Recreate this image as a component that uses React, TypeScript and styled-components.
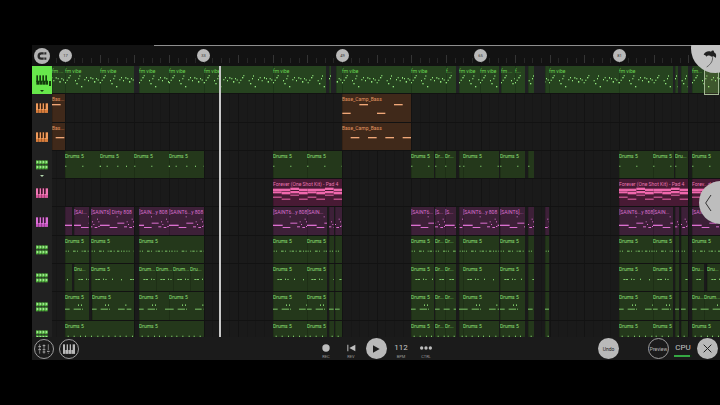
import React from "react";
import styled, { createGlobalStyle, css } from "styled-components";

/* ---------- timeline data ---------- */

const ORIGIN = 52;
const FIRST_BAR = 65;
const BAR = 277 / 32;

type Tone = "vibe" | "orange" | "green" | "pink" | "purple";
type Pattern = "vibe" | "bassA" | "bassB" | "hat" | "pad" | "sub" | "perc" | "snare" | "roll" | "kick";
/* start, end, label, phase of the note pattern (thirds of a unit) */
type ClipData = [number, number, string?, number?];
type Note = [number, number, number, number?];

const PALETTE: Record<Tone, { bg: string; text: string; note: string }> = {
  vibe: { bg: "#26431f", text: "#6bd653", note: "#93e67e" },
  orange: { bg: "#40291a", text: "#e39661", note: "#f0a778" },
  green: { bg: "#24381b", text: "#8fe078", note: "#7cc468" },
  pink: { bg: "#481a34", text: "#ea74b0", note: "#f068ad" },
  purple: { bg: "#3d2038", text: "#dc70d0", note: "#dc6fd0" },
};

/* Notes are [x, y, width, height] on a grid of three steps per unit. */
const PATTERNS: Record<Pattern, { period: number; notes: Note[] }> = {
  vibe: {
    period: 104,
    notes: [
      [0, 48, 3, 4], [5, 41, 3, 4], [10, 33, 4, 4], [14, 27, 3, 4], [30, 42, 3, 4], [34, 51, 4, 4], [40, 36, 3, 4],
      [43, 28, 3, 4], [48, 60, 4, 4], [58, 39, 3, 4], [63, 33, 3, 4], [69, 42, 3, 4], [76, 33, 3, 5], [82, 36, 3, 4],
      [87, 45, 4, 5], [93, 36, 3, 4], [98, 40, 3, 4],
    ],
  },
  bassA: { period: 104, notes: [[1, 56, 25, 4], [52, 30, 26, 4]] },
  bassB: { period: 52, notes: [[26, 42, 26, 4]] },
  hat: { period: 207, notes: [[1, 44, 3, 4], [52, 44, 3, 4], [104, 44, 3, 4], [124, 44, 3, 4], [156, 44, 3, 4], [182, 44, 3, 4]] },
  pad: {
    period: 104,
    notes: [
      [0, 29, 52, 7], [52, 26, 26, 7], [78, 29, 26, 7], [0, 37, 26, 6], [26, 38, 26, 8], [52, 36, 26, 7], [78, 38, 26, 8],
      [0, 53, 26], [26, 59, 26], [52, 47, 26], [78, 59, 26],
    ],
  },
  sub: {
    period: 104,
    notes: [
      [0, 53, 29, 4], [29, 60, 23], [50, 28, 3], [52, 47, 21], [72, 58, 9], [80, 43, 3], [84, 51, 3], [88, 60, 8],
      [95, 35, 3], [99, 43, 3], [99, 57, 4],
    ],
  },
  perc: {
    period: 104,
    notes: [
      [2, 44, 3], [9, 44, 3], [24, 44, 8], [36, 44, 3], [50, 44, 3], [56, 44, 7], [68, 44, 3], [78, 44, 7], [90, 44, 3], [97, 44, 4],
    ],
  },
  snare: { period: 104, notes: [[13, 45, 6], [20, 45, 7], [36, 44, 3, 4], [43, 45, 4], [63, 44, 3, 4], [90, 45, 3, 4]] },
  roll: {
    period: 104,
    notes: [[0, 50, 14], [26, 50, 22], [51, 50, 3], [39, 37, 3, 5], [48, 37, 3, 5], [78, 50, 20], [100, 37, 3, 5]],
  },
  kick: { period: 52, notes: [[8, 44, 3, 5], [26, 44, 3, 5], [45, 44, 3, 5]] },
};

const drumsTail: ClipData[] = [
  [273, 307, "Drums 5"], [307, 327, "Drums 5"], [329, 334], [335, 342],
  [411, 434, "Drums 5"], [435, 445, "Dr..."], [445, 456, "Dr..."], [459, 463], [463, 499, "Drums 5"],
  [500, 525, "Drums 5"], [528, 534],
];
const drumsFar: ClipData[] = [[619, 653, "Drums 5"], [653, 673, "Drums 5"], [675, 679], [681, 688]];

interface Track {
  name: string;
  icon: "keys" | "pads";
  tone: Tone;
  pattern: Pattern;
  selected?: boolean;
  expandable?: boolean;
  clips: ClipData[];
}

const TRACKS: Track[] = [
  {
    name: "fm vibe", icon: "keys", tone: "vibe", pattern: "vibe", selected: true, expandable: true,
    clips: [
      [52, 65, "fm ...", 65], [65, 100, "fm vibe"], [100, 134, "fm vibe"], [139, 169, "fm vibe"], [169, 204, "fm vibe"],
      [204, 273, "fm vibe"], [273, 326, "fm vibe"], [329, 331, "", 40], [336, 342, "", 85], [342, 411, "fm vibe"],
      [411, 446, "fm vibe"], [446, 456, "f..."], [459, 480, "fm vibe"], [480, 499, "fm vibe"], [501, 515, "fm ..."],
      [515, 525, "f..."], [528, 534, "", 28], [545, 549, "", 90], [549, 619, "fm vibe"], [619, 673, "fm vibe"],
      [675, 678, "", 40], [681, 688, "", 28], [692, 720, "fm..."],
    ],
  },
  { name: "Base_Camp_Bass", icon: "keys", tone: "orange", pattern: "bassA", clips: [[52, 65, "Bas...", 52], [342, 411, "Base_Camp_Bass"]] },
  { name: "Base_Camp_Bass 2", icon: "keys", tone: "orange", pattern: "bassB", clips: [[52, 65, "Bas...", 15], [342, 411, "Base_Camp_Bass"]] },
  {
    name: "Drums 5", icon: "pads", tone: "green", pattern: "hat", expandable: true,
    clips: [
      [65, 100, "Drums 5"], [100, 134, "Drums 5", 104], [134, 169, "Drums 5"], [169, 204, "Drums 5", 104],
      [273, 307, "Drums 5"], [307, 342, "Drums 5"],
      [411, 434, "Drums 5"], [435, 445, "Dr..."], [445, 456, "Dr..."], [459, 463], [463, 499, "Drums 5"],
      [500, 525, "Drums 5"], [528, 534],
      [619, 653, "Drums 5"], [653, 674, "Drums 5"], [675, 688, "Dru..."], [692, 720, "Drums 5"],
    ],
  },
  {
    name: "Forever (One Shot Kit) - Pad 4", icon: "keys", tone: "pink", pattern: "pad",
    clips: [[273, 342, "Forever (One Shot Kit) - Pad 4"], [619, 688, "Forever (One Shot Kit) - Pad 4"], [692, 720, "Forev...d 4"]],
  },
  {
    name: "[SAINT6] Dirty 808", icon: "keys", tone: "purple", pattern: "sub",
    clips: [
      [65, 72], [74, 89, "[SAI...", 8], [91, 134, "[SAINT6] Dirty 808", 77], [139, 169, "[SAIN...y 808", 14], [169, 204, "[SAINT6...y 808"],
      [273, 307, "[SAINT6...y 808"], [307, 327, "[SAIN..."], [329, 334, "", 74], [335, 342, "", 84],
      [411, 434, "[SAINT6..."], [435, 445, "[S...", 72], [445, 456, "[S..."], [459, 463, "", 86], [463, 499, "[SAINT6...y 808"],
      [500, 525, "[SAINT6]..."], [528, 534, "", 84], [545, 549, "", 88],
      [619, 653, "[SAINT6...y 808"], [653, 673, "[SAIN..."], [675, 679, "", 74], [681, 688, "", 84], [692, 720, "[SAINT6]..."],
    ],
  },
  {
    name: "Drums 5 B", icon: "pads", tone: "green", pattern: "perc",
    clips: [[65, 89, "Drums 5"], [91, 134, "Drums 5"], [139, 204, "Drums 5"], ...drumsTail, [545, 549], ...drumsFar, [692, 720, "Drums 5"]],
  },
  {
    name: "Drums 5 C", icon: "pads", tone: "green", pattern: "snare",
    clips: [
      [65, 72, "", 84], [74, 89, "Dru..."], [91, 134, "Drums 5"], [139, 156, "Drum..."], [156, 173, "Drum..."], [173, 190, "Drum..."],
      [190, 204, "Dru..."], ...drumsTail, [545, 549], ...drumsFar, [692, 704, "Dru..."], [707, 720, "Dru..."],
    ],
  },
  {
    name: "Drums 5 D", icon: "pads", tone: "green", pattern: "roll",
    clips: [
      [65, 89, "Drums 5"], [92, 134, "Drums 5"], [139, 169, "Drums 5"], [169, 204, "Drums 5"], ...drumsTail, [545, 549], ...drumsFar,
      [692, 704, "Dru..."], [704, 720, "Drum..."],
    ],
  },
  {
    name: "Drums 5 E", icon: "pads", tone: "green", pattern: "kick",
    clips: [[65, 134, "Drums 5"], [139, 204, "Drums 5"], ...drumsTail, [545, 549], ...drumsFar, [692, 720, "Drums 5"]],
  },
];

const MARKERS = [17, 33, 49, 65, 81];
const barX = (bar: number) => Math.floor(FIRST_BAR + (bar - 17) * BAR) - ORIGIN;

/* ---------- styles ---------- */

const Global = createGlobalStyle`
  * { box-sizing: border-box; }
  body { margin: 0; background: #000; font-family: Roboto, "Liberation Sans", sans-serif; }
  button { margin: 0; padding: 0; border: 0; background: none; font: inherit; color: inherit; }
  svg { display: block; }
`;

const Page = styled.div`
  padding: 45px 0 45px 32px;
  background: #000;
`;

const Studio = styled.main`
  position: relative;
  overflow: hidden;
  background: #1a1a1a;
  color: #c4c4c4;
`;

const Ruler = styled.header`
  display: grid;
  grid-template-columns: 20px 1fr;
  align-items: center;
  height: 21px;
  background: #121212;
`;

const ScrollLine = styled.div`
  position: absolute;
  top: 0;
  left: 122px;
  right: 0;
  height: 1px;
  background: #8e8e8e;
`;

const SnapButton = styled.button`
  display: grid;
  place-items: center;
  width: 16px;
  height: 16px;
  margin-left: 2px;
  border-radius: 50%;
  background: #b4b4b4;
`;

const RulerTrack = styled.div`
  position: relative;
  height: 21px;
  overflow: hidden;
`;

const BarMarker = styled.span<{ $x: number }>`
  position: absolute;
  top: 4px;
  left: ${(p) => p.$x}px;
  width: 13px;
  height: 13px;
  margin-left: -6px;
  border-radius: 50%;
  background: #b9b9b9;
  color: #333;
  font-size: 4px;
  line-height: 13px;
  text-align: center;
`;

const Viewport = styled.section`
  position: relative;
  height: 271px;
  overflow: hidden;
`;

const TrackList = styled.div`
  display: grid;
  grid-template-rows: repeat(10, 1fr);
  height: 283px;
`;

const TrackRow = styled.div`
  display: grid;
  grid-template-columns: 20px 1fr;
  min-height: 0;
`;

const TrackHead = styled.button<{ $selected?: boolean }>`
  position: relative;
  display: grid;
  place-items: center;
  background: ${(p) => (p.$selected ? "#67e74b" : "#212121")};
`;

const Caret = styled.span<{ $dark?: boolean }>`
  position: absolute;
  left: 8px;
  bottom: 2px;
  border: 2px solid transparent;
  border-bottom: 0;
  border-top-color: ${(p) => (p.$dark ? "#143a0e" : "#b5d8ae")};
`;

const Level = styled.span`
  position: absolute;
  right: 1px;
  bottom: 8px;
  width: 2px;
  height: 5px;
  background: #16400f;
`;

const Lane = styled.div<{ $selected?: boolean }>`
  position: relative;
  overflow: hidden;
  background: ${(p) => (p.$selected ? "#212124" : "#1a1a1a")};
  border-bottom: 1px solid #121212;
`;

const Backdrop = styled.div`
  position: absolute;
  inset: 0;
`;

const Clip = styled.div<{ $x: number; $w: number; $tone: Tone }>`
  position: absolute;
  top: 0;
  bottom: 0;
  left: ${(p) => p.$x}px;
  width: ${(p) => p.$w}px;
  overflow: hidden;
  background: ${(p) => PALETTE[p.$tone].bg};
  color: ${(p) => PALETTE[p.$tone].text};
  box-shadow: inset 1px 0 rgba(0, 0, 0, 0.16);
`;

const ClipLabel = styled.span`
  position: absolute;
  top: 2px;
  left: 0;
  font-size: 5px;
  line-height: 6px;
  white-space: nowrap;
`;

const Playhead = styled.div`
  position: absolute;
  top: 0;
  bottom: 0;
  left: 187px;
  width: 2px;
  background: #c9c9c9;
`;

const Selection = styled.div`
  position: absolute;
  top: 0;
  right: 1px;
  width: 15px;
  height: 29px;
  border: 1px solid #a3b894;
  background: rgba(190, 190, 120, 0.16);
`;

const Logo = styled.div`
  position: absolute;
  top: -21px;
  right: -20px;
  width: 49px;
  height: 49px;
  border-radius: 50%;
  background: #c3c3c3;
  display: flex;
  align-items: flex-end;
  padding: 0 0 5px 11px;
`;

const Drawer = styled.button`
  position: absolute;
  top: 136px;
  right: -22px;
  display: flex;
  align-items: center;
  width: 43px;
  height: 43px;
  padding-left: 5px;
  border-radius: 50%;
  background: #bdbdbd;
`;

const Transport = styled.footer`
  display: grid;
  grid-template-columns: 1fr auto 1fr;
  align-items: center;
  height: 23px;
  background: #1b1b1b;
`;

const Group = styled.div<{ $end?: boolean }>`
  display: flex;
  align-items: center;
  ${(p) =>
    p.$end
      ? css`
          justify-content: flex-end;
          gap: 4px;
          padding-right: 2px;
        `
      : css`
          gap: 5px;
          padding-left: 2px;
        `}
`;

const Controls = styled.div`
  display: grid;
  grid-template-columns: repeat(5, 25px);
  justify-items: center;
  align-items: center;
`;

const Stack = styled.button`
  display: grid;
  grid-template-rows: 12px 5px;
  justify-items: center;
  align-items: center;
  padding-top: 4px;
`;

const Caption = styled.span`
  font-size: 4px;
  line-height: 5px;
  color: #9a9a9a;
`;

const Tempo = styled.span`
  font-size: 8px;
  line-height: 12px;
  color: #c8c8c8;
`;

const RoundButton = styled.button<{ $kind?: "outline" | "solid"; $small?: boolean }>`
  display: grid;
  place-items: center;
  flex: none;
  width: ${(p) => (p.$small ? 20 : 21)}px;
  height: ${(p) => (p.$small ? 20 : 21)}px;
  border-radius: 50%;
  font-size: 5px;
  line-height: 6px;
  ${(p) =>
    p.$kind === "outline"
      ? css`
          border: 1px solid #9c9c9c;
          color: #b9b9b9;
        `
      : css`
          background: #b9b9b9;
          color: #1c1c1c;
        `}
`;

const UndoSlot = styled.div`
  padding-right: 25px;
`;

const Cpu = styled.div`
  display: grid;
  grid-template-rows: 12px 2px;
  justify-items: center;
  row-gap: 1px;
  width: 20px;
  padding-top: 2px;
  font-size: 8px;
  line-height: 12px;
`;

const CpuMeter = styled.div`
  width: 18px;
  height: 2px;
  background: linear-gradient(to right, #35a843 88%, #0d2c11 88%);
`;

/* ---------- drawings ---------- */

function Notes({ width, pattern, tone, phase = 0 }: { width: number; pattern: Pattern; tone: Tone; phase?: number }) {
  const { period, notes } = PATTERNS[pattern];
  const span = width * 3;
  const marks: React.ReactNode[] = [];
  for (let shift = -phase; shift < span; shift += period) {
    notes.forEach(([x, y, w, h = 3], i) => {
      const left = x + shift;
      if (left + w > 0 && left < span) marks.push(<rect key={`${shift}-${i}`} x={left} y={y} width={w} height={h} />);
    });
  }
  return (
    <svg width={width} height="28" viewBox={`0 0 ${span} 84`} fill={PALETTE[tone].note} aria-hidden="true">
      {marks}
    </svg>
  );
}

function Ticks() {
  const lines = [];
  for (let i = -1; i < 180; i++) {
    const x = Math.round(FIRST_BAR + i * BAR) - ORIGIN;
    const major = i % 4 === 0;
    lines.push(<rect key={i} x={x} y={major ? 10 : 13} width="1" height={major ? 8 : 5} fill={major ? "#343434" : "#272727"} />);
  }
  return <svg width="1600" height="21" aria-hidden="true">{lines}</svg>;
}

function GridLines() {
  const lines = [];
  for (let i = -1; i < 180; i++) {
    const x = Math.round(FIRST_BAR + i * BAR) - ORIGIN;
    lines.push(<rect key={i} x={x} y="0" width="1" height="30" fill={i % 4 === 0 ? "#131313" : "#171717"} />);
  }
  return <svg width="1600" height="30" aria-hidden="true">{lines}</svg>;
}

function KeysIcon({ color, gap, shade }: { color: string; gap: string; shade?: string }) {
  return (
    <svg width="12" height="10" viewBox="0 0 36 30" aria-hidden="true">
      <rect x="0" y="1" width="36" height="28" fill={color} />
      <rect x="0" y="21" width="36" height="8" fill={shade ?? color} />
      {[8, 17, 26].map((x) => (
        <g key={x} fill={gap}>
          <rect x={x - 2} y="0" width="5" height="18" />
          <rect x={x} y="18" width="1" height="12" />
        </g>
      ))}
    </svg>
  );
}

function SelectedKeysIcon() {
  return (
    <svg width="12" height="10" viewBox="0 0 36 30" fill="#123d0c" aria-hidden="true">
      {[1, 10, 19, 28].map((x) => (
        <g key={x}>
          <rect x={x} y="1" width="5" height="20" />
          <rect x={x} y="17" width="8" height="12" />
        </g>
      ))}
    </svg>
  );
}

function PadsIcon() {
  return (
    <svg width="12" height="10" viewBox="0 0 36 30" aria-hidden="true">
      {[1, 16].map((y) => [0, 9, 18, 27].map((x) => (
        <g key={`${x}-${y}`}>
          <rect x={x} y={y} width="8" height="12" fill="#4fae3c" />
          <rect x={x + 2} y={y + 2} width="5" height="6" fill="#9be98a" />
        </g>
      )))}
    </svg>
  );
}

function TrackIcon({ track }: { track: Track }) {
  if (track.selected) return <SelectedKeysIcon />;
  if (track.icon === "pads") return <PadsIcon />;
  if (track.tone === "orange") return <KeysIcon color="#f09a5a" shade="#d87c3a" gap="#3a2212" />;
  if (track.tone === "pink") return <KeysIcon color="#f078b4" shade="#d8569a" gap="#3c1529" />;
  return <KeysIcon color="#dc6fd6" shade="#c654c0" gap="#371a35" />;
}

/* ---------- app ---------- */

export default function App() {
  return (
    <>
      <Global />
      <Page>
        <Studio>
          <Ruler>
            <SnapButton aria-label="Snap">
              <svg width="10" height="10" viewBox="0 0 30 30" fill="none" aria-hidden="true">
                <path d="M28 7H13a8 8 0 0 0 0 16H28" stroke="#2b2b2b" strokeWidth="7" />
                <path d="M21 3v8M21 19v8" stroke="#b4b4b4" strokeWidth="2" />
              </svg>
            </SnapButton>
            <RulerTrack>
              <Ticks />
              {MARKERS.map((bar) => (
                <BarMarker key={bar} $x={barX(bar)}>{bar}</BarMarker>
              ))}
            </RulerTrack>
          </Ruler>
          <ScrollLine />

          <Viewport>
            <TrackList>
              {TRACKS.map((track) => (
                <TrackRow key={track.name}>
                  <TrackHead $selected={track.selected} aria-label={track.name}>
                    <TrackIcon track={track} />
                    {track.selected && <Level />}
                    {track.expandable && <Caret $dark={track.selected} />}
                  </TrackHead>
                  <Lane $selected={track.selected}>
                    {!track.selected && <Backdrop><GridLines /></Backdrop>}
                    {track.clips.map(([start, end, label, phase]) => (
                      <Clip key={start} $x={start - ORIGIN} $w={end - start} $tone={track.tone}>
                        <Notes width={end - start} pattern={track.pattern} tone={track.tone} phase={phase} />
                        {label && <ClipLabel>{label}</ClipLabel>}
                      </Clip>
                    ))}
                  </Lane>
                </TrackRow>
              ))}
            </TrackList>
            <Playhead />
            <Selection />
          </Viewport>

          <Transport>
            <Group>
              <RoundButton $kind="outline" $small aria-label="Mixer">
                <svg width="14" height="12" viewBox="0 0 42 36" stroke="#b0b0b0" strokeWidth="2" fill="none" aria-hidden="true">
                  <path d="M8 4v5M8 13v5M8 22v10M21 4v14M21 22v10M34 4v17M34 29v3" />
                  <path d="M4 11h8M4 20h8M17 20h8M17 8h8M17 27h8M30 25h8" strokeWidth="3" />
                </svg>
              </RoundButton>
              <RoundButton $kind="outline" $small aria-label="Keyboard">
                <KeysIcon color="#b9b9b9" gap="#1b1b1b" />
              </RoundButton>
            </Group>

            <Controls>
              <Stack>
                <svg width="8" height="8" viewBox="0 0 8 8" aria-hidden="true"><circle cx="4" cy="4" r="3.7" fill="#bdbdbd" /></svg>
                <Caption>REC</Caption>
              </Stack>
              <Stack>
                <svg width="9" height="8" viewBox="0 0 27 24" fill="#bdbdbd" aria-hidden="true"><path d="M1 2h3v20H1zM25 2v20L7 12z" /></svg>
                <Caption>REV</Caption>
              </Stack>
              <RoundButton aria-label="Play">
                <svg width="8" height="8" viewBox="0 0 24 24" fill="#1c1c1c" aria-hidden="true"><path d="M3 1l20 11L3 23z" /></svg>
              </RoundButton>
              <Stack>
                <Tempo>112</Tempo>
                <Caption>BPM</Caption>
              </Stack>
              <Stack>
                <svg width="14" height="4" viewBox="0 0 42 12" fill="#bdbdbd" aria-hidden="true">
                  <circle cx="8" cy="6" r="5" /><circle cx="21" cy="6" r="5" /><circle cx="34" cy="6" r="5" />
                </svg>
                <Caption>CTRL</Caption>
              </Stack>
            </Controls>

            <Group $end>
              <UndoSlot><RoundButton>Undo</RoundButton></UndoSlot>
              <RoundButton $kind="outline">Preview</RoundButton>
              <Cpu>
                <span>CPU</span>
                <CpuMeter />
              </Cpu>
              <RoundButton aria-label="Close">
                <svg width="9" height="9" viewBox="0 0 27 27" stroke="#1f1f1f" strokeWidth="3" aria-hidden="true"><path d="M2 2l23 23M25 2L2 25" /></svg>
              </RoundButton>
            </Group>
          </Transport>

          <Logo role="img" aria-label="Menu">
            <svg width="16" height="20" viewBox="0 0 48 60" aria-hidden="true">
              <path d="M5 20C8 12 18 7 27 11C30 6 37 7 36 13C43 16 44 24 41 30C37 25 32 24 28 26C24 21 16 22 13 26C12 22 9 20 5 20z" fill="#202020" />
              <path d="M31 24C34 36 28 48 14 57" stroke="#303030" strokeWidth="2" fill="none" />
            </svg>
          </Logo>
          <Drawer aria-label="Open panel">
            <svg width="9" height="18" viewBox="0 0 27 54" stroke="#333" strokeWidth="3" fill="none" aria-hidden="true"><path d="M21 3L5 27l16 24" /></svg>
          </Drawer>
        </Studio>
      </Page>
    </>
  );
}
